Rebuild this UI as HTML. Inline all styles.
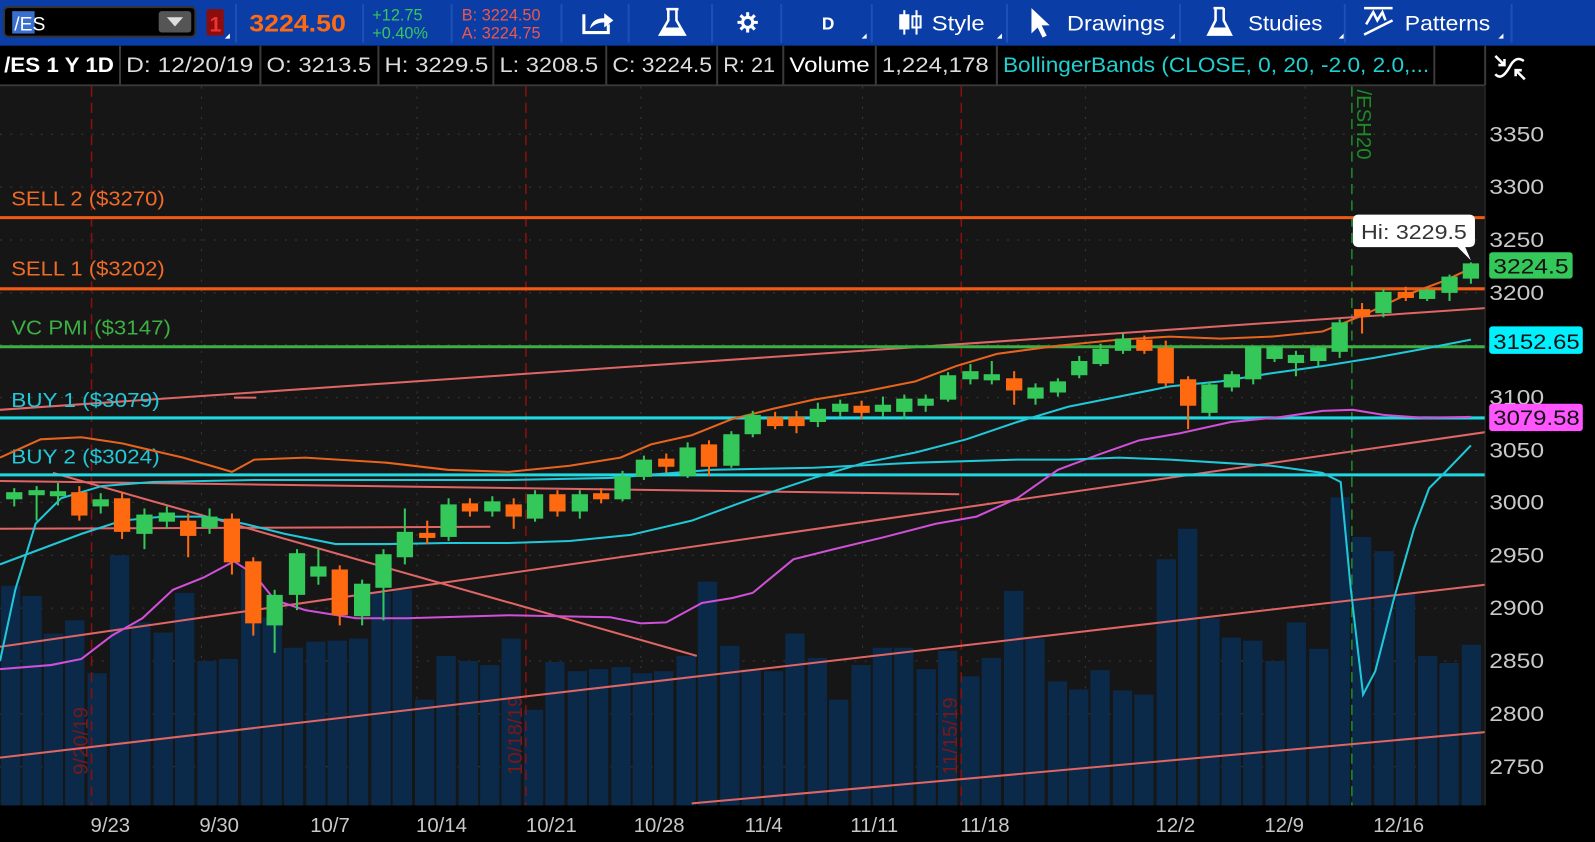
<!DOCTYPE html>
<html><head><meta charset="utf-8"><style>
html,body{margin:0;padding:0;background:#000;overflow:hidden}
svg{display:block}
text{font-family:"Liberation Sans",sans-serif}
</style></head><body>
<svg width="1595" height="842" viewBox="0 0 1568 828" preserveAspectRatio="none" xmlns="http://www.w3.org/2000/svg">
<rect x="0" y="0" width="1568" height="45" fill="#0a3ea6"/>
<rect x="4" y="7" width="188" height="29" rx="4" fill="#000" stroke="#333" stroke-width="2"/>
<rect x="12" y="11" width="22" height="22" fill="#3a6fd0"/>
<text x="14" y="30" font-size="19" fill="#fff">/ES</text>
<rect x="156" y="11" width="32" height="21" rx="3" fill="#555"/>
<path d="M164 17 L180 17 L172 26 Z" fill="#ddd"/>
<rect x="203" y="9" width="17" height="26" rx="2" fill="#8b0d0d"/>
<text x="206" y="31" font-size="21" font-weight="bold" fill="#e33">1</text>
<path d="M221 38 L226 38 L226 33 Z" fill="#fff"/>
<line x1="232" y1="4" x2="232" y2="42" stroke="#1d50b8" stroke-width="2"/>
<text x="245" y="31" font-size="24" font-weight="bold" fill="#ff6a10" textLength="95" lengthAdjust="spacingAndGlyphs">3224.50</text>
<line x1="357" y1="4" x2="357" y2="42" stroke="#1d50b8" stroke-width="2"/>
<text x="366" y="20" font-size="16" fill="#36c85a">+12.75</text>
<text x="366" y="38" font-size="16" fill="#36c85a">+0.40%</text>
<line x1="444" y1="4" x2="444" y2="42" stroke="#1d50b8" stroke-width="2"/>
<text x="454" y="20" font-size="16" fill="#f0564a">B: 3224.50</text>
<text x="454" y="38" font-size="16" fill="#f0564a">A: 3224.75</text>
<line x1="552" y1="4" x2="552" y2="42" stroke="#1d50b8" stroke-width="2"/>
<path d="M574 14 L574 32 L598 32 L598 24" fill="none" stroke="#fff" stroke-width="3"/>
<path d="M580 28 Q582 18 594 18 L594 13 L603 20 L594 27 L594 22 Q586 22 580 28 Z" fill="#fff"/>
<line x1="618" y1="4" x2="618" y2="42" stroke="#1d50b8" stroke-width="2"/>
<path d="M655 9 L667 9 M657 9 L657 20 L649 34 L673 34 L665 20 L665 9" fill="none" stroke="#fff" stroke-width="2.5"/>
<path d="M653 27 L669 27 L673 34 L649 34 Z" fill="#fff"/>
<line x1="700" y1="4" x2="700" y2="42" stroke="#1d50b8" stroke-width="2"/>
<g transform="translate(735,22)" stroke="#fff" stroke-width="3">
<line x1="-10" y1="0" x2="10" y2="0"/><line x1="0" y1="-10" x2="0" y2="10"/>
<line x1="-7" y1="-7" x2="7" y2="7"/><line x1="-7" y1="7" x2="7" y2="-7"/>
<circle r="5" fill="#0a3ea6" stroke-width="3"/></g>
<line x1="768" y1="4" x2="768" y2="42" stroke="#1d50b8" stroke-width="2"/>
<text x="808" y="29" font-size="17" font-weight="bold" fill="#fff">D</text>
<path d="M847 38 L852 38 L852 33 Z" fill="#fff"/>
<line x1="857" y1="4" x2="857" y2="42" stroke="#1d50b8" stroke-width="2"/>
<g stroke="#fff" stroke-width="2" fill="none"><line x1="889" y1="10" x2="889" y2="34"/><rect x="885" y="15" width="8" height="13" fill="#fff"/><line x1="901" y1="10" x2="901" y2="34"/><rect x="897" y="16" width="8" height="11"/></g>
<text x="916" y="30" font-size="21" fill="#fff" textLength="52" lengthAdjust="spacingAndGlyphs">Style</text>
<path d="M980 38 L985 38 L985 33 Z" fill="#fff"/>
<line x1="990" y1="4" x2="990" y2="42" stroke="#1d50b8" stroke-width="2"/>
<path d="M1014 8 L1014 33 L1020 27 L1025 37 L1029 35 L1024 25 L1032 25 Z" fill="#fff"/>
<text x="1049" y="30" font-size="21" fill="#fff" textLength="96" lengthAdjust="spacingAndGlyphs">Drawings</text>
<path d="M1150 38 L1155 38 L1155 33 Z" fill="#fff"/>
<line x1="1160" y1="4" x2="1160" y2="42" stroke="#1d50b8" stroke-width="2"/>
<path d="M1193 8 L1203 8 M1195 8 L1195 20 L1188 34 L1210 34 L1203 20 L1203 8" fill="none" stroke="#fff" stroke-width="2.5"/>
<path d="M1191 27 L1207 27 L1210 34 L1188 34 Z" fill="#fff"/>
<text x="1227" y="30" font-size="21" fill="#fff" textLength="73" lengthAdjust="spacingAndGlyphs">Studies</text>
<path d="M1316 38 L1321 38 L1321 33 Z" fill="#fff"/>
<line x1="1322" y1="4" x2="1322" y2="42" stroke="#1d50b8" stroke-width="2"/>
<g stroke="#fff" stroke-width="2.5" fill="none"><line x1="1341" y1="8" x2="1369" y2="8"/><path d="M1343 24 L1350 12 L1354 20 L1359 12 L1362 20"/><line x1="1341" y1="34" x2="1369" y2="20"/></g>
<text x="1381" y="30" font-size="21" fill="#fff" textLength="84" lengthAdjust="spacingAndGlyphs">Patterns</text>
<path d="M1473 38 L1478 38 L1478 33 Z" fill="#fff"/>
<line x1="1486" y1="4" x2="1486" y2="42" stroke="#1d50b8" stroke-width="2"/>

<rect x="0" y="45" width="1568" height="40" fill="#000"/>
<g stroke="#3a3a3a" stroke-width="2">
<line x1="0" y1="84" x2="1460" y2="84"/>
<line x1="118" y1="45" x2="118" y2="84"/><line x1="256" y1="45" x2="256" y2="84"/><line x1="372" y1="45" x2="372" y2="84"/><line x1="485" y1="45" x2="485" y2="84"/><line x1="596" y1="45" x2="596" y2="84"/><line x1="705" y1="45" x2="705" y2="84"/><line x1="770" y1="45" x2="770" y2="84"/><line x1="861" y1="45" x2="861" y2="84"/><line x1="980" y1="45" x2="980" y2="84"/><line x1="1410" y1="45" x2="1410" y2="84"/><line x1="1460" y1="45" x2="1460" y2="84"/>
</g>
<g font-size="21" fill="#ddd" lengthAdjust="spacingAndGlyphs">
<text x="4" y="71" font-weight="bold" fill="#fff" textLength="108" lengthAdjust="spacingAndGlyphs">/ES 1 Y 1D</text>
<text x="124" y="71" textLength="125" lengthAdjust="spacingAndGlyphs">D: 12/20/19</text>
<text x="262" y="71" textLength="103" lengthAdjust="spacingAndGlyphs">O: 3213.5</text>
<text x="378" y="71" textLength="102" lengthAdjust="spacingAndGlyphs">H: 3229.5</text>
<text x="491" y="71" textLength="97" lengthAdjust="spacingAndGlyphs">L: 3208.5</text>
<text x="602" y="71" textLength="98" lengthAdjust="spacingAndGlyphs">C: 3224.5</text>
<text x="711" y="71" textLength="51" lengthAdjust="spacingAndGlyphs">R: 21</text>
<text x="776" y="71" fill="#fff" textLength="79" lengthAdjust="spacingAndGlyphs">Volume</text>
<text x="867" y="71" textLength="105" lengthAdjust="spacingAndGlyphs">1,224,178</text>
<text x="986" y="71" fill="#20d0d0" textLength="419" lengthAdjust="spacingAndGlyphs">BollingerBands (CLOSE, 0, 20, -2.0, 2.0,...</text>
</g>
<g stroke="#fff" stroke-width="2.5" fill="none"><path d="M1470 55 L1479 64 M1479 58 L1479 64 L1473 64"/><path d="M1499 78 L1490 69 M1490 75 L1490 69 L1496 69"/><path d="M1470 73 Q1476 80 1484 66 Q1490 54 1498 60"/></g>

<rect x="0" y="85" width="1460" height="707" fill="#161616"/>
<rect x="1460" y="85" width="108" height="743" fill="#000"/>
<rect x="0" y="792" width="1460" height="36" fill="#000"/>
<g stroke="#3a3a3a" stroke-width="1" stroke-dasharray="2 8">
<line x1="0" y1="132" x2="1460" y2="132"/><line x1="0" y1="184" x2="1460" y2="184"/><line x1="0" y1="236" x2="1460" y2="236"/><line x1="0" y1="288" x2="1460" y2="288"/><line x1="0" y1="339" x2="1460" y2="339"/><line x1="0" y1="391" x2="1460" y2="391"/><line x1="0" y1="443" x2="1460" y2="443"/><line x1="0" y1="494" x2="1460" y2="494"/><line x1="0" y1="546" x2="1460" y2="546"/><line x1="0" y1="598" x2="1460" y2="598"/><line x1="0" y1="650" x2="1460" y2="650"/><line x1="0" y1="702" x2="1460" y2="702"/><line x1="0" y1="754" x2="1460" y2="754"/>
<line x1="198" y1="85" x2="198" y2="792"/><line x1="410" y1="85" x2="410" y2="792"/><line x1="630" y1="85" x2="630" y2="792"/><line x1="848" y1="85" x2="848" y2="792"/><line x1="1067" y1="85" x2="1067" y2="792"/><line x1="1283" y1="85" x2="1283" y2="792"/>
</g>
<g fill="#0b2a4a">
<rect x="1" y="576" width="19" height="216"/><rect x="22" y="586" width="19" height="206"/><rect x="43" y="623" width="19" height="169"/><rect x="64" y="610" width="19" height="182"/><rect x="86" y="662" width="19" height="130"/><rect x="108" y="546" width="19" height="246"/><rect x="129" y="612" width="19" height="180"/><rect x="151" y="622" width="19" height="170"/><rect x="172" y="583" width="19" height="209"/><rect x="194" y="650" width="19" height="142"/><rect x="215" y="648" width="19" height="144"/><rect x="237" y="560" width="19" height="232"/><rect x="258" y="607" width="19" height="185"/><rect x="279" y="637" width="19" height="155"/><rect x="301" y="631" width="19" height="161"/><rect x="322" y="630" width="19" height="162"/><rect x="343" y="628" width="19" height="164"/><rect x="365" y="583" width="19" height="209"/><rect x="386" y="580" width="19" height="212"/><rect x="408" y="688" width="19" height="104"/><rect x="429" y="645" width="19" height="147"/><rect x="451" y="650" width="19" height="142"/><rect x="472" y="654" width="19" height="138"/><rect x="493" y="628" width="19" height="164"/><rect x="515" y="698" width="19" height="94"/><rect x="536" y="651" width="19" height="141"/><rect x="558" y="660" width="19" height="132"/><rect x="579" y="658" width="19" height="134"/><rect x="601" y="656" width="19" height="136"/><rect x="622" y="662" width="19" height="130"/><rect x="643" y="660" width="19" height="132"/><rect x="665" y="645" width="19" height="147"/><rect x="686" y="572" width="19" height="220"/><rect x="708" y="635" width="19" height="157"/><rect x="729" y="658" width="19" height="134"/><rect x="751" y="660" width="19" height="132"/><rect x="772" y="623" width="19" height="169"/><rect x="794" y="647" width="19" height="145"/><rect x="815" y="688" width="19" height="104"/><rect x="837" y="654" width="19" height="138"/><rect x="858" y="637" width="19" height="155"/><rect x="879" y="637" width="19" height="155"/><rect x="901" y="658" width="19" height="134"/><rect x="922" y="640" width="19" height="152"/><rect x="944" y="665" width="19" height="127"/><rect x="965" y="647" width="19" height="145"/><rect x="987" y="581" width="19" height="211"/><rect x="1008" y="628" width="19" height="164"/><rect x="1030" y="670" width="19" height="122"/><rect x="1051" y="678" width="19" height="114"/><rect x="1072" y="659" width="19" height="133"/><rect x="1094" y="679" width="19" height="113"/><rect x="1115" y="683" width="19" height="109"/><rect x="1137" y="550" width="19" height="242"/><rect x="1158" y="520" width="19" height="272"/><rect x="1180" y="608" width="19" height="184"/><rect x="1201" y="627" width="19" height="165"/><rect x="1222" y="630" width="19" height="162"/><rect x="1244" y="650" width="19" height="142"/><rect x="1265" y="612" width="19" height="180"/><rect x="1287" y="638" width="19" height="154"/><rect x="1308" y="489" width="19" height="303"/><rect x="1329" y="528" width="19" height="264"/><rect x="1351" y="542" width="19" height="250"/><rect x="1372" y="584" width="19" height="208"/><rect x="1394" y="645" width="19" height="147"/><rect x="1415" y="652" width="19" height="140"/><rect x="1437" y="634" width="19" height="158"/>
</g>
<g stroke-width="1.5" stroke-dasharray="10 6">
<line x1="90" y1="85" x2="90" y2="792" stroke="#8a1010"/>
<line x1="517" y1="85" x2="517" y2="792" stroke="#8a1010"/>
<line x1="945" y1="85" x2="945" y2="792" stroke="#8a1010"/>
<line x1="1329" y1="85" x2="1329" y2="792" stroke="#1d8a2a"/>
</g>
<g font-size="20" fill="#7a1818">
<text transform="translate(86,762) rotate(-90)">9/20/19</text>
<text transform="translate(513,762) rotate(-90)">10/18/19</text>
<text transform="translate(941,762) rotate(-90)">11/15/19</text>
</g>
<text transform="translate(1334,88) rotate(90)" font-size="20" fill="#1d8a2a">/ESH20</text>
<g stroke="#e06565" stroke-width="2" fill="none">
<line x1="0" y1="403" x2="1460" y2="303"/>
<line x1="0" y1="636" x2="1460" y2="425"/>
<line x1="0" y1="745" x2="1460" y2="575"/>
<line x1="680" y1="790" x2="1460" y2="720"/>
<line x1="52" y1="465" x2="685" y2="645"/>
<line x1="0" y1="520" x2="482" y2="518"/>
<line x1="0" y1="473" x2="943" y2="486"/>
<line x1="230" y1="391" x2="252" y2="391"/>
</g>
<line x1="0" y1="214" x2="1460" y2="214" stroke="#f05a14" stroke-width="3"/>
<line x1="0" y1="284" x2="1460" y2="284" stroke="#f05a14" stroke-width="3"/>
<line x1="0" y1="341" x2="1460" y2="341" stroke="#3cb043" stroke-width="3"/>
<line x1="0" y1="411" x2="1460" y2="411" stroke="#20d8e0" stroke-width="3"/>
<line x1="0" y1="467" x2="1460" y2="467" stroke="#20d8e0" stroke-width="3"/>
<g font-size="20">
<text x="11" y="202" fill="#f06a28" textLength="151" lengthAdjust="spacingAndGlyphs">SELL 2 ($3270)</text>
<text x="11" y="271" fill="#f06a28" textLength="151" lengthAdjust="spacingAndGlyphs">SELL 1 ($3202)</text>
<text x="11" y="329" fill="#3cb043" textLength="157" lengthAdjust="spacingAndGlyphs">VC PMI ($3147)</text>
<text x="11" y="400" fill="#20c8d8" textLength="146" lengthAdjust="spacingAndGlyphs">BUY 1 ($3079)</text>
<text x="11" y="456" fill="#20c8d8" textLength="146" lengthAdjust="spacingAndGlyphs">BUY 2 ($3024)</text>
</g>
<g fill="none" stroke-width="2">
<polyline stroke="#e8641e" points="0,450 40,432 80,430 120,436 180,450 228,464 250,452 300,450 380,455 440,462 500,464 560,458 610,450 640,437 680,428 720,412 760,402 800,393 850,385 900,375 940,360 980,348 1040,340 1100,334 1150,331 1200,333 1250,331 1300,326 1340,310 1380,291 1420,276 1446,264"/>
<polyline stroke="#20c8d8" points="0,555 40,540 80,525 120,512 160,508 200,508 240,515 280,525 330,535 380,535 440,534 500,534 560,532 620,526 680,512 740,490 800,470 850,455 900,445 950,432 1000,415 1050,400 1100,390 1150,380 1200,375 1250,367 1300,360 1350,352 1400,343 1446,334"/>
<polyline stroke="#d050d8" points="0,658 50,654 80,648 110,625 140,608 170,580 200,568 230,552 250,565 270,590 300,600 350,608 400,608 500,605 600,607 630,613 655,612 690,593 720,588 740,583 780,550 820,540 870,528 920,515 960,508 1000,490 1040,462 1080,447 1120,433 1160,426 1210,415 1260,410 1300,404 1330,403 1360,408 1400,411 1446,410"/>
<polyline stroke="#20c8d8" points="0,650 15,580 35,515 60,490 100,478 150,474 250,472 350,472 500,472 600,470 700,462 800,460 900,455 1000,452 1050,452 1100,450 1150,452 1200,455 1250,458 1300,465 1318,474 1328,580 1340,683 1352,660 1370,590 1390,520 1405,480 1420,465 1446,438"/>
</g>
<g stroke-width="2">
<g stroke="#34c759" fill="#34c759">
<line x1="14" y1="480" x2="14" y2="498"/><rect x="7" y="485" width="14" height="5"/>
<line x1="36" y1="478" x2="36" y2="512"/><rect x="29" y="483" width="14" height="3"/>
<line x1="57" y1="475" x2="57" y2="497"/><rect x="50" y="484" width="14" height="3"/>
<line x1="99" y1="485" x2="99" y2="505"/><rect x="92" y="492" width="14" height="5"/>
<line x1="142" y1="500" x2="142" y2="540"/><rect x="135" y="507" width="14" height="17"/>
<line x1="164" y1="498" x2="164" y2="520"/><rect x="157" y="505" width="14" height="7"/>
<line x1="206" y1="500" x2="206" y2="525"/><rect x="199" y="509" width="14" height="9"/>
<line x1="270" y1="580" x2="270" y2="642"/><rect x="263" y="586" width="14" height="28"/>
<line x1="292" y1="540" x2="292" y2="600"/><rect x="285" y="545" width="14" height="39"/>
<line x1="313" y1="540" x2="313" y2="575"/><rect x="306" y="558" width="14" height="8"/>
<line x1="356" y1="570" x2="356" y2="615"/><rect x="349" y="575" width="14" height="30"/>
<line x1="377" y1="540" x2="377" y2="610"/><rect x="370" y="546" width="14" height="31"/>
<line x1="398" y1="500" x2="398" y2="555"/><rect x="391" y="524" width="14" height="23"/>
<line x1="441" y1="490" x2="441" y2="532"/><rect x="434" y="497" width="14" height="30"/>
<line x1="484" y1="488" x2="484" y2="508"/><rect x="477" y="494" width="14" height="8"/>
<line x1="526" y1="482" x2="526" y2="513"/><rect x="519" y="487" width="14" height="22"/>
<line x1="570" y1="482" x2="570" y2="510"/><rect x="563" y="487" width="14" height="15"/>
<line x1="612" y1="463" x2="612" y2="493"/><rect x="605" y="469" width="14" height="21"/>
<line x1="633" y1="448" x2="633" y2="472"/><rect x="626" y="453" width="14" height="15"/>
<line x1="676" y1="435" x2="676" y2="470"/><rect x="669" y="441" width="14" height="26"/>
<line x1="719" y1="424" x2="719" y2="460"/><rect x="712" y="428" width="14" height="29"/>
<line x1="740" y1="404" x2="740" y2="430"/><rect x="733" y="409" width="14" height="17"/>
<line x1="804" y1="396" x2="804" y2="420"/><rect x="797" y="403" width="14" height="11"/>
<line x1="826" y1="393" x2="826" y2="410"/><rect x="819" y="398" width="14" height="6"/>
<line x1="868" y1="390" x2="868" y2="410"/><rect x="861" y="399" width="14" height="5"/>
<line x1="889" y1="388" x2="889" y2="412"/><rect x="882" y="393" width="14" height="11"/>
<line x1="910" y1="388" x2="910" y2="405"/><rect x="903" y="393" width="14" height="5"/>
<line x1="932" y1="366" x2="932" y2="395"/><rect x="925" y="370" width="14" height="22"/>
<line x1="954" y1="358" x2="954" y2="378"/><rect x="947" y="366" width="14" height="6"/>
<line x1="975" y1="355" x2="975" y2="378"/><rect x="968" y="369" width="14" height="4"/>
<line x1="1018" y1="377" x2="1018" y2="398"/><rect x="1011" y="382" width="14" height="9"/>
<line x1="1040" y1="372" x2="1040" y2="390"/><rect x="1033" y="376" width="14" height="9"/>
<line x1="1061" y1="350" x2="1061" y2="372"/><rect x="1054" y="356" width="14" height="12"/>
<line x1="1082" y1="338" x2="1082" y2="360"/><rect x="1075" y="344" width="14" height="13"/>
<line x1="1104" y1="328" x2="1104" y2="348"/><rect x="1097" y="334" width="14" height="10"/>
<line x1="1189" y1="375" x2="1189" y2="410"/><rect x="1182" y="379" width="14" height="26"/>
<line x1="1211" y1="365" x2="1211" y2="385"/><rect x="1204" y="369" width="14" height="11"/>
<line x1="1232" y1="340" x2="1232" y2="378"/><rect x="1225" y="342" width="14" height="30"/>
<line x1="1253" y1="340" x2="1253" y2="356"/><rect x="1246" y="342" width="14" height="10"/>
<line x1="1274" y1="345" x2="1274" y2="370"/><rect x="1267" y="350" width="14" height="6"/>
<line x1="1296" y1="340" x2="1296" y2="360"/><rect x="1289" y="343" width="14" height="11"/>
<line x1="1317" y1="314" x2="1317" y2="352"/><rect x="1310" y="318" width="14" height="27"/>
<line x1="1360" y1="284" x2="1360" y2="312"/><rect x="1353" y="288" width="14" height="19"/>
<line x1="1403" y1="284" x2="1403" y2="296"/><rect x="1396" y="286" width="14" height="7"/>
<line x1="1425" y1="270" x2="1425" y2="296"/><rect x="1418" y="273" width="14" height="14"/>
<line x1="1446" y1="258" x2="1446" y2="279"/><rect x="1439" y="260" width="14" height="13"/>
</g>
<g stroke="#ff6a10" fill="#ff6a10">
<line x1="78" y1="478" x2="78" y2="512"/><rect x="71" y="485" width="14" height="21"/>
<line x1="120" y1="484" x2="120" y2="530"/><rect x="113" y="491" width="14" height="31"/>
<line x1="185" y1="505" x2="185" y2="548"/><rect x="178" y="513" width="14" height="13"/>
<line x1="228" y1="505" x2="228" y2="565"/><rect x="221" y="511" width="14" height="41"/>
<line x1="249" y1="548" x2="249" y2="625"/><rect x="242" y="553" width="14" height="59"/>
<line x1="334" y1="556" x2="334" y2="615"/><rect x="327" y="561" width="14" height="43"/>
<line x1="420" y1="512" x2="420" y2="535"/><rect x="413" y="525" width="14" height="3"/>
<line x1="462" y1="490" x2="462" y2="508"/><rect x="455" y="496" width="14" height="6"/>
<line x1="505" y1="490" x2="505" y2="520"/><rect x="498" y="497" width="14" height="10"/>
<line x1="548" y1="482" x2="548" y2="508"/><rect x="541" y="487" width="14" height="15"/>
<line x1="591" y1="480" x2="591" y2="495"/><rect x="584" y="486" width="14" height="4"/>
<line x1="655" y1="446" x2="655" y2="465"/><rect x="648" y="452" width="14" height="6"/>
<line x1="697" y1="433" x2="697" y2="468"/><rect x="690" y="438" width="14" height="20"/>
<line x1="762" y1="405" x2="762" y2="422"/><rect x="755" y="411" width="14" height="7"/>
<line x1="783" y1="404" x2="783" y2="426"/><rect x="776" y="411" width="14" height="7"/>
<line x1="847" y1="394" x2="847" y2="412"/><rect x="840" y="400" width="14" height="5"/>
<line x1="997" y1="365" x2="997" y2="398"/><rect x="990" y="373" width="14" height="10"/>
<line x1="1125" y1="330" x2="1125" y2="348"/><rect x="1118" y="335" width="14" height="9"/>
<line x1="1146" y1="335" x2="1146" y2="380"/><rect x="1139" y="343" width="14" height="33"/>
<line x1="1168" y1="370" x2="1168" y2="422"/><rect x="1161" y="374" width="14" height="24"/>
<line x1="1339" y1="298" x2="1339" y2="328"/><rect x="1332" y="305" width="14" height="5"/>
<line x1="1382" y1="282" x2="1382" y2="296"/><rect x="1375" y="288" width="14" height="4"/>
</g>
</g>
<rect x="1330" y="211" width="120" height="32" rx="5" fill="#fff"/>
<path d="M1432 242 L1446 256 L1440 242 Z" fill="#fff"/>
<text x="1338" y="235" font-size="20" fill="#333" textLength="104" lengthAdjust="spacingAndGlyphs">Hi: 3229.5</text>
<line x1="1460" y1="85" x2="1460" y2="792" stroke="#333" stroke-width="1"/>
<g font-size="21" fill="#c8c8c8">
<text x="1464" y="139" textLength="54" lengthAdjust="spacingAndGlyphs">3350</text><text x="1464" y="191" textLength="54" lengthAdjust="spacingAndGlyphs">3300</text><text x="1464" y="243" textLength="54" lengthAdjust="spacingAndGlyphs">3250</text><text x="1464" y="295" textLength="54" lengthAdjust="spacingAndGlyphs">3200</text><text x="1464" y="398" textLength="54" lengthAdjust="spacingAndGlyphs">3100</text><text x="1464" y="450" textLength="54" lengthAdjust="spacingAndGlyphs">3050</text><text x="1464" y="501" textLength="54" lengthAdjust="spacingAndGlyphs">3000</text><text x="1464" y="553" textLength="54" lengthAdjust="spacingAndGlyphs">2950</text><text x="1464" y="605" textLength="54" lengthAdjust="spacingAndGlyphs">2900</text><text x="1464" y="657" textLength="54" lengthAdjust="spacingAndGlyphs">2850</text><text x="1464" y="709" textLength="54" lengthAdjust="spacingAndGlyphs">2800</text><text x="1464" y="761" textLength="54" lengthAdjust="spacingAndGlyphs">2750</text>
</g>
<rect x="1464" y="248" width="82" height="26" rx="3" fill="#34c759"/>
<text x="1468" y="269" font-size="21" fill="#111" textLength="74" lengthAdjust="spacingAndGlyphs">3224.5</text>
<rect x="1464" y="321" width="92" height="27" rx="3" fill="#00f0ff"/>
<text x="1468" y="343" font-size="21" fill="#111" textLength="85" lengthAdjust="spacingAndGlyphs">3152.65</text>
<rect x="1464" y="397" width="92" height="27" rx="3" fill="#ff55ff"/>
<text x="1468" y="418" font-size="21" fill="#111" textLength="85" lengthAdjust="spacingAndGlyphs">3079.58</text>
<g font-size="20" fill="#c8c8c8">
<text x="89" y="818">9/23</text><text x="196" y="818">9/30</text><text x="305" y="818">10/7</text><text x="409" y="818">10/14</text><text x="517" y="818">10/21</text><text x="623" y="818">10/28</text><text x="732" y="818">11/4</text><text x="836" y="818">11/11</text><text x="944" y="818">11/18</text><text x="1136" y="818">12/2</text><text x="1243" y="818">12/9</text><text x="1350" y="818">12/16</text>
</g>
</svg>
</body></html>
